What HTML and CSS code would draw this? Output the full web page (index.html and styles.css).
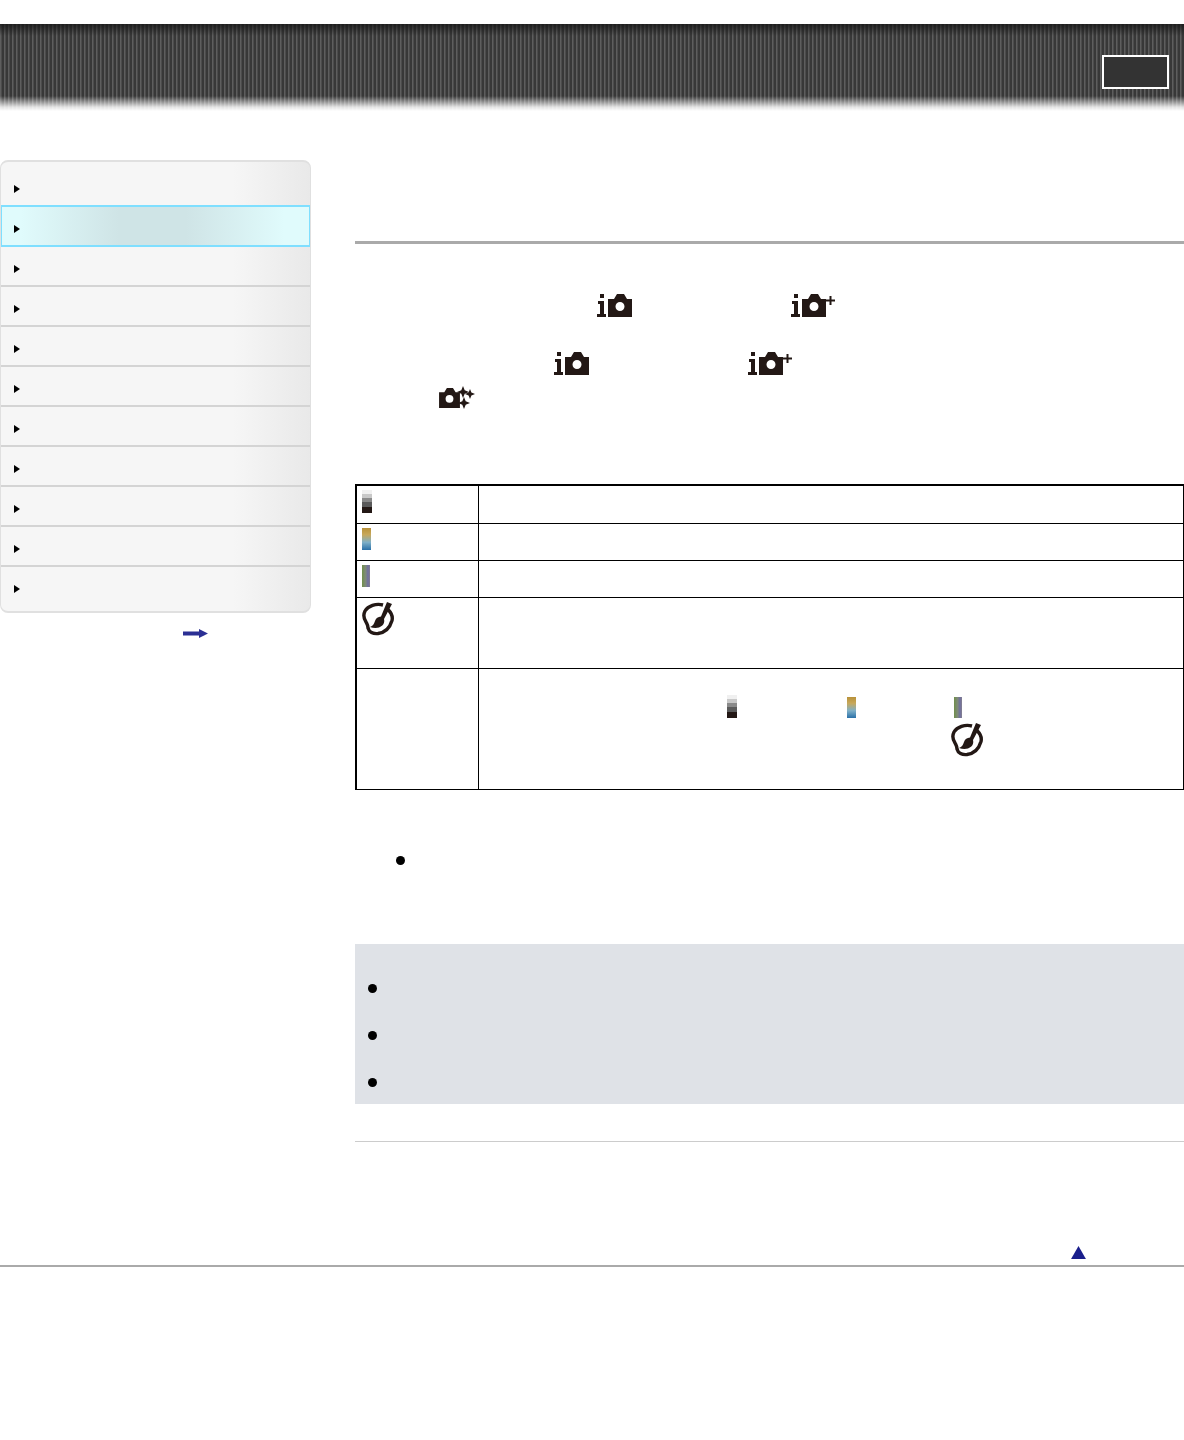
FILE: index.html
```html
<!DOCTYPE html>
<html lang="en">
<head>
  <meta charset="UTF-8">
  <meta name="viewport" content="width=device-width, initial-scale=1.0">
  <title>Help Guide</title>
  <link rel="stylesheet" href="styles.css">
</head>
<body>

  <svg class="icon-defs" width="0" height="0" aria-hidden="true">
    <defs>
      <symbol id="cam" viewBox="0 0 24 23">
        <path fill="#231815" fill-rule="evenodd" d="M0 5h6l3-5h7l3 5h5v18H0zM12 8a4.500 4.500 0 1 0 0 9 4.500 4.500 0 0 0 0-9z"/>
      </symbol>
      <symbol id="i-auto" viewBox="0 0 36 23">
        <path fill="#231815" d="M3 0h4v4H3zM1 7h6v13h2v3H0v-3h3V10H1z"/>
        <use href="#cam" x="11" y="0" width="24" height="23"/>
      </symbol>
      <symbol id="i-plus" viewBox="0 0 44 23">
        <path fill="#231815" d="M3 0h4v4H3zM1 7h6v13h2v3H0v-3h3V10H1z"/>
        <use href="#cam" x="11" y="0" width="24" height="23"/>
        <path fill="#231815" d="M38.500 2h2v3.500H44v2h-3.500V11h-2V7.500H35v-2h3.500z"/>
      </symbol>
      <symbol id="brush" viewBox="0 0 32 34">
        <path fill="none" stroke="#231815" stroke-width="3.4" d="M21 3C14 1 6 4 3 9 1 13 2 17 4 20c1 2 2 3 2 6 1 4 5 6 10 5.500 7-1 12-6 14-13 1-4-1-8-4-11"/>
        <path fill="#231815" d="M25 0l5 2-8 15c1 4-1 7-5 8.500-3 .8-6 .5-9-.5 3-1 4-3 5-6 1-3 3-4 6-4.500z"/>
      </symbol>
    </defs>
  </svg>

  <!-- Header -->
  <header class="header">
    <div class="header-btn"></div>
  </header>

  <div class="page">

    <!-- Sidebar -->
    <aside class="sidebar">
      <ul class="menu">
        <li class="menu-item first"></li>
        <li class="menu-item active"></li>
        <li class="menu-item"></li>
        <li class="menu-item"></li>
        <li class="menu-item"></li>
        <li class="menu-item"></li>
        <li class="menu-item"></li>
        <li class="menu-item"></li>
        <li class="menu-item"></li>
        <li class="menu-item"></li>
        <li class="menu-item last"></li>
      </ul>
      <div class="more">
        <svg class="more-arrow" viewBox="0 0 25 9"><path fill="#2b2f94" d="M0 2.500h16V0l9 4.500-9 4.500V6.500H0z"/></svg>
      </div>
    </aside>

    <!-- Main content -->
    <main class="content">
      <div class="title-rule"></div>

      <div class="icon-line line-1">
        <svg class="ic-auto"><use href="#i-auto"/></svg>
        <svg class="ic-plus"><use href="#i-plus"/></svg>
      </div>
      <div class="icon-line line-2">
        <svg class="ic-auto"><use href="#i-auto"/></svg>
        <svg class="ic-plus"><use href="#i-plus"/></svg>
      </div>
      <div class="icon-line line-3">
        <svg class="ic-scene" viewBox="0 0 36 23">
          <use href="#cam" x="0" y="2" width="21" height="20"/>
          <path fill="#231815" d="M24 0l1.700 4.300 4.300 1.700-4.300 1.700L24 12l-1.700-4.300-4.300-1.700 4.300-1.700zM31 3l1.400 3.600 3.600 1.400-3.600 1.400L31 13l-1.400-3.600-3.600-1.400 3.600-1.400zM25 11l1.700 4.300 4.300 1.700-4.300 1.700L25 23l-1.700-4.300-4.300-1.700 4.300-1.700z"/>
        </svg>
      </div>

      <table class="spec">
        <tr class="row-a">
          <td class="col-1"><span class="swatch mono"></span></td>
          <td></td>
        </tr>
        <tr class="row-b">
          <td class="col-1"><span class="swatch warm"></span></td>
          <td></td>
        </tr>
        <tr class="row-b">
          <td class="col-1"><span class="swatch tint"></span></td>
          <td></td>
        </tr>
        <tr class="row-c">
          <td class="col-1"><svg class="ic-brush"><use href="#brush"/></svg></td>
          <td></td>
        </tr>
        <tr class="row-d">
          <td class="col-1"></td>
          <td>
            <div class="swatch-line">
              <span class="swatch mono"></span>
              <span class="swatch warm"></span>
              <span class="swatch tint"></span>
            </div>
            <div class="brush-line">
              <svg class="ic-brush"><use href="#brush"/></svg>
            </div>
          </td>
        </tr>
      </table>

      <ul class="bullets">
        <li></li>
      </ul>

      <div class="note">
        <ul>
          <li></li>
          <li></li>
          <li></li>
        </ul>
      </div>

      <div class="note-rule"></div>

      <div class="to-top">
        <svg class="top-arrow" viewBox="0 0 16 14"><path fill="#1a1f8c" d="M8 0l8 14H0z"/></svg>
      </div>
    </main>
  </div>

  <!-- Footer -->
  <footer class="footer"></footer>

</body>
</html>
```

FILE: styles.css
```css
* {
  margin: 0;
  padding: 0;
  box-sizing: border-box;
  font-family: 'Liberation Sans', sans-serif;
}

body {
  background: #fff;
  height: 1440px;
  overflow: hidden;
}

.icon-defs {
  position: absolute;
}

.ic-auto, .ic-plus, .ic-scene, .ic-brush, .more-arrow, .top-arrow, .swatch {
  filter: blur(0.4px);
}

/* Header band */
.header {
  margin-top: 24px;
  height: 87px;
  padding: 31px 15px 0 0;
  display: flex;
  justify-content: flex-end;
  align-items: flex-start;
  background:
    linear-gradient(to bottom, rgba(20, 20, 20, 0.75) 0, rgba(20, 20, 20, 0) 12px),
    linear-gradient(to bottom, rgba(255, 255, 255, 0) 72px, rgba(255, 255, 255, 0.85) 83px, #fff 87px),
    repeating-linear-gradient(to right, #5e5e5e 0, #5e5e5e 1px, #4c4c4c 1px, #4c4c4c 2px, #383838 2px, #383838 4px);
}

.header-btn {
  width: 67px;
  height: 34px;
  background: #333;
  border: 2px solid #fff;
}

.page {
  display: flex;
  padding-top: 49px;
}

/* Sidebar */
.sidebar {
  width: 311px;
  flex-shrink: 0;
}

.menu {
  list-style: none;
  border: 1px solid #e0e0e0;
  border-top-width: 2px;
  border-bottom-width: 2px;
  border-radius: 8px;
  overflow: hidden;
  background: linear-gradient(to right, #f6f6f6 0, #f6f6f6 75%, #e9e9e9 100%);
}

.menu-item {
  height: 40px;
  border-bottom: 2px solid #d4d4d4;
  position: relative;
}

.menu-item::before {
  content: "";
  position: absolute;
  left: 13px;
  top: 18px;
  border-left: 6px solid #000;
  border-top: 4px solid transparent;
  border-bottom: 4px solid transparent;
}

.menu-item.first {
  height: 43px;
  border-bottom: 0;
}

.menu-item.first::before {
  top: 23px;
}

.menu-item.active {
  height: 42px;
  margin: 0 -1px;
  border: 2px solid #7fdfff;
  background: linear-gradient(to right, #e0fbfc 0, #e0fbfc 6%, #cfe4e6 38%, #cfe4e6 60%, #e0fbfc 92%);
}

.menu-item.active::before {
  left: 12px;
  top: 18px;
}

.menu-item.last {
  height: 44px;
  border-bottom: 0;
}

.more {
  display: flex;
  justify-content: flex-start;
  padding: 16px 0 0 183px;
}

.more-arrow {
  width: 25px;
  height: 9px;
  display: block;
}

/* Main column */
.content {
  flex: 1;
  margin-left: 44px;
  padding-top: 81px;
}

.title-rule {
  height: 3px;
  background: #aaa;
}

.icon-line {
  display: flex;
  align-items: flex-start;
}

.line-1 {
  padding: 50px 0 0 242px;
}

.line-2 {
  padding: 35px 0 0 199px;
}

.line-3 {
  padding: 11px 0 0 84px;
}

.ic-auto {
  width: 36px;
  height: 23px;
  display: block;
}

.ic-plus {
  width: 44px;
  height: 23px;
  display: block;
  margin-left: 158px;
}

.ic-scene {
  width: 36px;
  height: 23px;
  display: block;
}

/* Table */
.spec {
  width: 829px;
  margin-top: 75px;
  border-collapse: collapse;
  border-top: 2px solid #000;
  border-left: 2px solid #000;
  border-right: 1px solid #000;
}

.spec td {
  border: 1px solid #000;
  padding: 4px 5px 0;
  vertical-align: top;
}

.spec tr:first-child td {
  border-top: 0;
}

.spec td:first-child {
  border-left: 0;
}

.spec td:last-child {
  border-right: 0;
}

.col-1 {
  width: 122px;
}

.row-a td {
  height: 38px;
}

.row-b td {
  height: 37px;
}

.row-c td {
  height: 71px;
}

.row-d td {
  height: 121px;
  padding: 26px 0 0;
}

.swatch {
  display: block;
  width: 8px;
  height: 22px;
}

.swatch.mono {
  width: 10px;
  height: 23px;
  background: linear-gradient(to bottom,
    #f0f0f0 0, #f0f0f0 18%,
    #c8c8c8 18%, #c8c8c8 36%,
    #8a8a8a 36%, #8a8a8a 54%,
    #5a5a5a 54%, #5a5a5a 72%,
    #231815 72%, #231815 100%);
}

.swatch.warm {
  width: 9px;
  background: linear-gradient(to bottom, #b8923a 0, #c8a85a 30%, #7fb0c8 65%, #2a70a8 100%);
}

.swatch.tint {
  background: linear-gradient(to right, #6f8f4a 0, #7f8a7a 45%, #6f6f9f 75%, #85808f 100%);
}

.ic-brush {
  width: 32px;
  height: 34px;
  display: block;
}

.swatch-line {
  display: flex;
  align-items: flex-end;
  padding-left: 248px;
}

.swatch-line .warm {
  height: 21px;
  margin-left: 110px;
}

.swatch-line .tint {
  height: 21px;
  margin-left: 98px;
}

.brush-line {
  padding: 5px 0 0 472px;
}

/* Bullet list */
.bullets {
  list-style: none;
  padding: 66px 0 0 41px;
}

.bullets li,
.note li {
  width: 9px;
  height: 9px;
  border-radius: 50%;
  background: #000;
}

/* Note box */
.note {
  margin-top: 79px;
  height: 160px;
  background: #dfe2e7;
  padding: 40px 0 0 13px;
}

.note ul {
  list-style: none;
  display: flex;
  flex-direction: column;
  gap: 38px;
}

.note-rule {
  margin-top: 37px;
  height: 1px;
  background: #ccc;
}

.to-top {
  padding: 104px 0 0 716px;
}

.top-arrow {
  width: 15px;
  height: 13px;
  display: block;
}

/* Footer */
.footer {
  margin-top: 6px;
  height: 2px;
  background: #aaa;
}
```
